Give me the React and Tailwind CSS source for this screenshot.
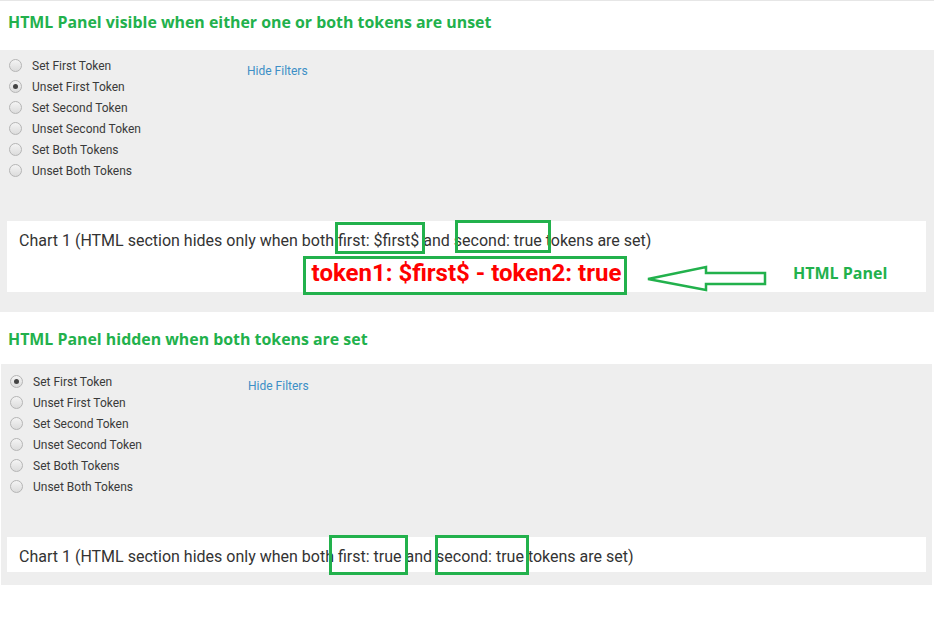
const GREEN = 'border-[#22b14c]';

const options = [
  'Set First Token',
  'Unset First Token',
  'Set Second Token',
  'Unset Second Token',
  'Set Both Tokens',
  'Unset Both Tokens',
];

function Radio({ checked }) {
  return (
    <span className="flex h-[13px] w-[13px] items-center justify-center rounded-full border border-[#b5b5b5] bg-gradient-to-b from-[#f4f4f4] to-[#dcdcdc]">
      {checked && <span className="h-[5px] w-[5px] rounded-full bg-[#444]" />}
    </span>
  );
}

function Filters({ selected, linkTop }) {
  return (
    <div className="flex" style={{ fontFamily: 'Roboto, sans-serif' }}>
      <div className="flex w-[247px] flex-col pl-[9px]">
        {options.map((label, i) => (
          <label key={label} className="flex h-[21px] items-center gap-[10px] text-[12px] text-[#3a3a3a]">
            <Radio checked={i === selected} />
            {label}
          </label>
        ))}
      </div>
      <div className={`${linkTop} text-[12px] text-[#3d8fc6]`}>Hide Filters</div>
    </div>
  );
}

function Title({ children }) {
  return (
    <h2
      className="px-2 text-[15.9px] font-bold text-[#22b14c]"
      style={{ fontFamily: '"Open Sans", sans-serif' }}
    >
      {children}
    </h2>
  );
}

function Box({ className }) {
  return <div className={`pointer-events-none absolute border-[3px] ${GREEN} ${className}`} />;
}

export default function App() {
  return (
    <div className="relative h-[627px] w-[934px] overflow-hidden border-t border-[#e6e6e6] bg-white">
      <div className="flex h-[49px] items-center pb-[5px]">
        <Title>HTML Panel visible when either one or both tokens are unset</Title>
      </div>

      <section className="h-[262px] bg-[#eeeeee] pt-[5px]">
        <Filters selected={1} linkTop="pt-[7px]" />
        <div className="ml-[7px] mt-[40px] h-[71px] w-[919px] bg-white" style={{ fontFamily: 'Roboto, sans-serif' }}>
          <p className="pl-[12px] pt-[8px] text-[16px] text-[#333]">
            Chart 1 (HTML section hides only when both first: $first$ and second: true tokens are set)
          </p>
          <p className="mt-[5px] text-center text-[24px] font-bold leading-[30px] text-[#ff0000]">
            token1: $first$ - token2: true
          </p>
        </div>
      </section>

      <div className="flex h-[52px] items-center pt-[4px]">
        <Title>HTML Panel hidden when both tokens are set</Title>
      </div>

      <section className="ml-px h-[221px] w-[931px] bg-[#eeeeee] pt-[7px]">
        <Filters selected={0} linkTop="pt-[6px]" />
        <div className="ml-[6px] mt-[40px] flex h-[35px] w-[919px] items-center bg-white pt-[5px]" style={{ fontFamily: 'Roboto, sans-serif' }}>
          <p className="pl-[12px] text-[16px] text-[#333]">
            Chart 1 (HTML section hides only when both first: true and second: true tokens are set)
          </p>
        </div>
      </section>

      <Box className="left-[335px] top-[221px] h-[32px] w-[90px]" />
      <Box className="left-[455px] top-[219px] h-[33px] w-[96px]" />
      <Box className="left-[303px] top-[255px] h-[39px] w-[324px]" />
      <svg className="absolute left-[640px] top-[260px]" width="130" height="36" viewBox="640 260 130 36">
        <polygon
          points="648,278 706,266 706,272 765,272 765,283 706,283 706,289"
          fill="none"
          stroke="#22b14c"
          strokeWidth="2.5"
          strokeLinejoin="miter"
        />
      </svg>
      <div
        className="absolute left-[793px] top-[260px] text-[16px] font-bold text-[#22b14c]"
        style={{ fontFamily: '"Open Sans", sans-serif' }}
      >
        HTML Panel
      </div>
      <Box className="left-[329px] top-[534px] h-[40px] w-[79px]" />
      <Box className="left-[435px] top-[534px] h-[40px] w-[94px]" />
    </div>
  );
}
